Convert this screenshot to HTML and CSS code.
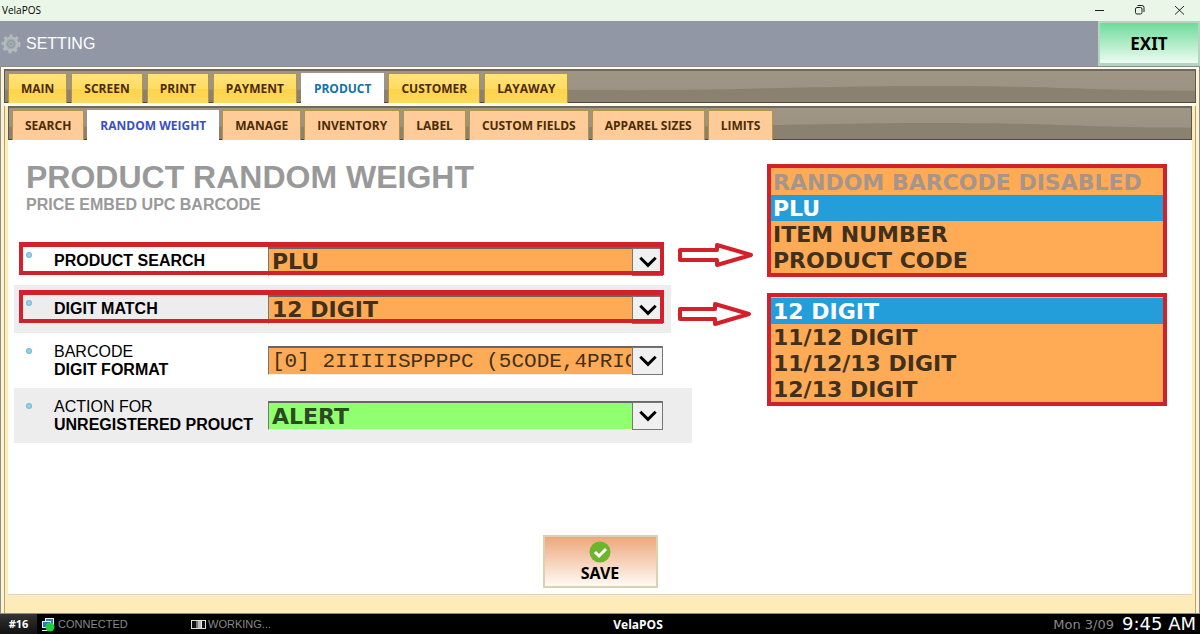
FILE: index.html
```html
<!DOCTYPE html>
<html lang="en">

<head>
    <meta charset="UTF-8" />
    <meta name="viewport" content="width=device-width, initial-scale=1.0" />
    <title>VelaPOS - Setting</title>
    <link rel="stylesheet" href="styles.css">
</head>

<body>

    <div class="titlebar">
        <span>VelaPOS</span>
        <div class="window-buttons">
            <button type="button" aria-label="Minimize">
                <svg width="12" height="12" viewBox="0 0 12 12"><path d="M1 6.500h9" /></svg>
            </button>
            <button type="button" aria-label="Restore">
                <svg width="12" height="12" viewBox="0 0 12 12"><rect x="1.500" y="3.500" width="6.500" height="6.500" rx="1.500" /><path d="M3.500 1.500h4.500q2 0 2 2V8" /></svg>
            </button>
            <button type="button" aria-label="Close">
                <svg width="12" height="12" viewBox="0 0 12 12"><path d="M1 2l9 8.500M10 2l-9 8.500" /></svg>
            </button>
        </div>
    </div>

    <header class="header">
        <svg class="gear" width="20" height="20" viewBox="0 0 20 20">
            <circle class="teeth" cx="10" cy="10" r="8" />
            <circle class="ring" cx="10" cy="10" r="6.500" />
            <circle class="hub" cx="10" cy="10" r="3.500" />
            <circle class="pin" cx="10" cy="10" r="1" />
        </svg>
        <h1>SETTING</h1>
        <button type="button" class="exit">EXIT</button>
    </header>

    <div class="frame">
        <nav class="tabs">
            <svg class="wave" viewBox="0 0 1190 33" preserveAspectRatio="none"><path d="M0 20H560C700 22 800 16 930 16S1080 21 1190 21V33H0Z" /></svg>
            <a href="#main">MAIN</a>
            <a href="#screen">SCREEN</a>
            <a href="#print">PRINT</a>
            <a href="#payment">PAYMENT</a>
            <a href="#product" class="active">PRODUCT</a>
            <a href="#customer">CUSTOMER</a>
            <a href="#layaway">LAYAWAY</a>
        </nav>

        <div class="panel">
            <nav class="tabs subtabs">
                <svg class="wave" viewBox="0 0 1190 33" preserveAspectRatio="none"><path d="M0 20H560C700 22 800 16 930 16S1080 21 1190 21V33H0Z" /></svg>
                <a href="#search">SEARCH</a>
                <a href="#random-weight" class="active">RANDOM WEIGHT</a>
                <a href="#manage">MANAGE</a>
                <a href="#inventory">INVENTORY</a>
                <a href="#label">LABEL</a>
                <a href="#custom-fields">CUSTOM FIELDS</a>
                <a href="#apparel-sizes">APPAREL SIZES</a>
                <a href="#limits">LIMITS</a>
            </nav>

            <main class="content">
                <div class="columns">
                    <section class="settings">
                        <h2>PRODUCT RANDOM WEIGHT</h2>
                        <h3>PRICE EMBED UPC BARCODE</h3>

                        <div class="row marked">
                            <i class="dot"></i>
                            <label for="productSearch"><b>PRODUCT SEARCH</b></label>
                            <div class="field">
                                <select id="productSearch">
                                    <option>PLU</option>
                                    <option>ITEM NUMBER</option>
                                    <option>PRODUCT CODE</option>
                                </select>
                                <svg class="caret" viewBox="0 0 29 27"><path d="M7 9l8 8 8-8" /></svg>
                            </div>
                        </div>
                        <div class="row marked shaded">
                            <i class="dot"></i>
                            <label for="digitMatch"><b>DIGIT MATCH</b></label>
                            <div class="field">
                                <select id="digitMatch">
                                    <option>12 DIGIT</option>
                                    <option>11/12 DIGIT</option>
                                    <option>11/12/13 DIGIT</option>
                                    <option>12/13 DIGIT</option>
                                </select>
                                <svg class="caret" viewBox="0 0 29 27"><path d="M7 9l8 8 8-8" /></svg>
                            </div>
                        </div>
                        <div class="row tall">
                            <i class="dot"></i>
                            <label for="digitFormat">BARCODE<br><b>DIGIT FORMAT</b></label>
                            <div class="field">
                                <select id="digitFormat" class="mono">
                                    <option>[0] 2IIIIISPPPPC (5CODE,4PRICE)</option>
                                </select>
                                <svg class="caret" viewBox="0 0 29 27"><path d="M7 9l8 8 8-8" /></svg>
                            </div>
                        </div>
                        <div class="row tall shaded wide">
                            <i class="dot"></i>
                            <label for="unregistered">ACTION FOR<br><b>UNREGISTERED PROUCT</b></label>
                            <div class="field">
                                <select id="unregistered" class="green">
                                    <option>ALERT</option>
                                </select>
                                <svg class="caret" viewBox="0 0 29 27"><path d="M7 9l8 8 8-8" /></svg>
                            </div>
                        </div>
                    </section>

                    <div class="arrows">
                        <svg width="78" height="26" viewBox="0 0 78 26"><path d="M3 8h37V3l34 10-34 10v-5H3z" /></svg>
                        <svg width="78" height="26" viewBox="0 0 78 26"><path d="M3 8h35V3l34 10-34 10v-5H3z" /></svg>
                    </div>

                    <div class="lists">
                        <select size="4" class="list" aria-label="Product search options">
                            <option disabled>RANDOM BARCODE DISABLED</option>
                            <option selected>PLU</option>
                            <option>ITEM NUMBER</option>
                            <option>PRODUCT CODE</option>
                        </select>
                        <select size="4" class="list" aria-label="Digit match options">
                            <option selected>12 DIGIT</option>
                            <option>11/12 DIGIT</option>
                            <option>11/12/13 DIGIT</option>
                            <option>12/13 DIGIT</option>
                        </select>
                    </div>
                </div>

                <button type="button" class="save">
                    <svg width="22" height="22" viewBox="0 0 22 22">
                        <circle cx="11" cy="11" r="10.500" />
                        <path d="M6 11l4 4 7-7" />
                    </svg>
                    SAVE
                </button>
            </main>
        </div>
    </div>

    <footer class="statusbar">
        <span class="station">#16</span>
        <span class="status connected">
            <svg width="15" height="15" viewBox="0 0 15 15">
                <rect x="4.500" y="1.500" width="8" height="6" fill="#2b7fb5" stroke="#e8f2f8" />
                <rect x="1.500" y="4.500" width="8" height="6" fill="#2b7fb5" stroke="#e8f2f8" />
                <path d="M1 13.500h8" stroke="#e8f2f8" />
                <circle cx="9" cy="10" r="4.500" fill="#1fd13b" />
            </svg>
            CONNECTED
        </span>
        <span class="status">
            <svg width="15" height="9" viewBox="0 0 15 9">
                <rect x="0.500" y="0.500" width="14" height="8" fill="#111" stroke="#ddd" />
                <path d="M5 1h2v7H5z" fill="#777" />
                <path d="M7 1h3v7H7z" fill="#bbb" />
                <path d="M10 1h1v7h-1z" fill="#eee" />
            </svg>
            WORKING...
        </span>
        <strong class="brand">VelaPOS</strong>
        <span class="date">Mon 3/09</span>
        <span class="time">9:45 AM</span>
    </footer>

</body>

</html>
```
FILE: styles.css
```css
* {
    box-sizing: border-box;
}

body {
    margin: 0;
    min-height: 100vh;
    display: flex;
    flex-direction: column;
    background-color: #fff;
    font-family: "Liberation Sans", Arial, sans-serif;
    font-size: 16px;
    color: #000;
}

button {
    font-family: "Noto Sans", sans-serif;
    font-weight: bold;
    color: #000;
    cursor: pointer;
}

/* Window title bar */
.titlebar {
    height: 21px;
    display: flex;
    justify-content: space-between;
    align-items: center;
    padding: 0 14px 2px 2px;
    background-color: #eaf7e8;
    font: 10px "Open Sans", sans-serif;
}

.window-buttons {
    display: flex;
    gap: 28px;
}

.window-buttons button {
    display: flex;
    padding: 0;
    border: none;
    background: none;
}

.window-buttons svg {
    fill: none;
    stroke: #222;
}

/* Header */
.header {
    height: 45px;
    display: flex;
    align-items: center;
    gap: 5px;
    padding-left: 1px;
    background-color: #9297a5;
}

.header h1 {
    margin: 0;
    color: #fff;
    font-size: 16px;
    font-weight: normal;
}

.gear circle {
    fill: none;
    stroke: #b3bcbd;
    stroke-width: 2;
}

.gear .teeth {
    stroke-width: 3;
    stroke-dasharray: 3 3;
}

.gear .ring {
    fill: #a5afb2;
}

.gear .hub,
.gear .pin {
    stroke: #8b979d;
    stroke-width: 1;
}

.exit {
    align-self: stretch;
    width: 102px;
    margin-left: auto;
    border: 2px solid #b5d5c3;
    border-bottom-width: 3px;
    background: linear-gradient(#6edb9a, #ecfcf2);
    font-size: 17px;
}

/* Tabs */
.frame {
    flex: 1;
    display: flex;
    flex-direction: column;
    padding: 2px 3px 18px;
    border: 1px solid #8f8c83;
    background-color: #fdecba;
    box-shadow: inset 0 2px #fffbee, inset 3px 0 #fbf2d8, inset -3px 0 #fbf2d8, inset 4px 0 #b5a468, inset -4px 0 #b5a468;
}

.tabs {
    position: relative;
    display: flex;
    gap: 4px;
    height: 34px;
    padding: 2px 3px 0;
    border: 1px solid #5e5749;
    border-top: 2px solid #6e6860;
    border-bottom-color: #4e473b;
    background: linear-gradient(#9f9686, #989080);
}

.wave {
    position: absolute;
    inset: 0;
    width: 100%;
    height: 100%;
    fill: #8a8170;
}

.tabs a {
    position: relative;
    height: 30px;
    padding: 0 12px;
    border: 1px solid #b49442;
    border-bottom: none;
    background: linear-gradient(#ffe27a, #ffdc62 50%, #fdd34a 50%, #ffda5c);
    color: #4b2c06;
    font: bold 12px/29px "Open Sans", sans-serif;
    text-decoration: none;
}

.tabs a.active {
    border-color: #fff;
    background: #fff;
    color: #1272a8;
}

.panel {
    flex: 1;
    display: flex;
    flex-direction: column;
    margin-top: 3px;
    padding: 0 4px;
    box-shadow: 0 -3px #fffbee;
}

.subtabs {
    gap: 3px;
}

.subtabs a {
    background: #ffcb98;
}

.subtabs a.active {
    color: #3a4fc4;
}

/* Page content */
.content {
    flex: 1;
    display: flex;
    flex-direction: column;
    border-bottom: 1px solid #ddd5c0;
    background-color: #fff;
}

.columns {
    display: flex;
    padding: 18px 24px 0 6px;
}

.settings {
    width: 657px;
}

.settings h2 {
    margin: 0 12px;
    color: #999;
    font-size: 32px;
    line-height: 38px;
}

.settings h3 {
    margin: 0 12px 23px;
    color: #999;
    font-size: 16px;
    line-height: 18px;
}

.row {
    position: relative;
    display: flex;
    align-items: center;
    height: 48px;
    padding: 0 8px 0 40px;
    font-size: 16px;
    line-height: 18px;
}

.row.tall {
    height: 55px;
}

.row.shaded {
    background-color: #ededed;
}

.row.wide {
    margin-right: -21px;
    padding-right: 29px;
}

.row label {
    width: 214px;
}

.dot {
    position: absolute;
    left: 12px;
    top: 15px;
    width: 6px;
    height: 6px;
    border-radius: 50%;
    background: radial-gradient(#a5dcf3, #5fa6cc);
}

.field {
    position: relative;
    flex: 1;
}

.field select {
    display: block;
    appearance: none;
    width: 100%;
    height: 29px;
    padding: 0 31px 0 3px;
    border: 1px solid #777;
    border-top: 2px solid #666;
    border-right-color: #ccc;
    border-bottom-color: #eee;
    border-radius: 0;
    background-color: #ffaa55;
    color: #40301c;
    font: bold 22px "DejaVu Sans", sans-serif;
}

.field select.mono {
    font: 21px "Liberation Mono", monospace;
}

.field select.green {
    background-color: #90ff70;
    color: #2c4a22;
}

.caret {
    position: absolute;
    top: 1px;
    right: 0;
    width: 31px;
    height: 28px;
    border: 1px solid #777;
    background-color: #f0f0f0;
    fill: none;
    stroke: #000;
    stroke-width: 3;
    pointer-events: none;
}

/* Red highlight round a row */
.marked::after {
    content: "";
    position: absolute;
    inset: 5px 7px 10px 5px;
    border: 4px solid #d3212b;
    border-top-width: 5px;
    pointer-events: none;
}

.arrows {
    display: flex;
    flex-direction: column;
    gap: 33px;
    padding: 84px 12px 0 6px;
}

.arrows svg {
    fill: #fff;
    stroke: #d3212b;
    stroke-width: 4;
    stroke-linejoin: round;
}

.lists {
    flex: 1;
    max-width: 400px;
    display: flex;
    flex-direction: column;
    gap: 16px;
    padding-top: 6px;
}

.list {
    width: 100%;
    height: 113px;
    padding: 1px 0 0;
    border: 4px solid #d3212b;
    border-radius: 0;
    background-color: #ffaa55;
    overflow: hidden;
    outline: none;
    font-size: 22px;
}

.list option {
    height: 26px;
    min-height: 26px;
    padding: 1px 2px 0;
    color: #40301c;
    font: bold 22px/25px "DejaVu Sans", sans-serif;
}

.list option:checked {
    background: linear-gradient(#249edb, #249edb);
    color: #fff;
}

.list option:disabled {
    color: #a5958a;
}

.save {
    display: flex;
    flex-direction: column;
    align-items: center;
    width: 115px;
    height: 53px;
    margin: auto auto 6px;
    padding: 4px 0 0;
    border: 2px solid #dccfb4;
    background: linear-gradient(#eda87c, #fffaf4);
    font-size: 16px;
    line-height: 20px;
}

.save circle {
    fill: #6cb52d;
}

.save path {
    fill: none;
    stroke: #fff;
    stroke-width: 3;
}

/* Status bar */
.statusbar {
    position: relative;
    display: flex;
    align-items: center;
    height: 20px;
    background-color: #000;
    color: #888;
    font-size: 11px;
}

.station {
    width: 37px;
    background: linear-gradient(#333, #111);
    color: #fff;
    font: bold 11px/20px "Open Sans", sans-serif;
    text-align: center;
}

.status {
    display: flex;
    align-items: center;
    gap: 2px;
}

.connected {
    width: 154px;
    padding-left: 4px;
}

.brand {
    position: absolute;
    left: 0;
    right: 0;
    padding-left: 76px;
    color: #fff;
    font: bold 12px "Open Sans", sans-serif;
    text-align: center;
}

.date {
    margin-left: auto;
    font: 13px "DejaVu Sans", sans-serif;
}

.time {
    margin: 0 4px 0 8px;
    color: #fff;
    font: 18px/20px "DejaVu Sans", sans-serif;
}
```
